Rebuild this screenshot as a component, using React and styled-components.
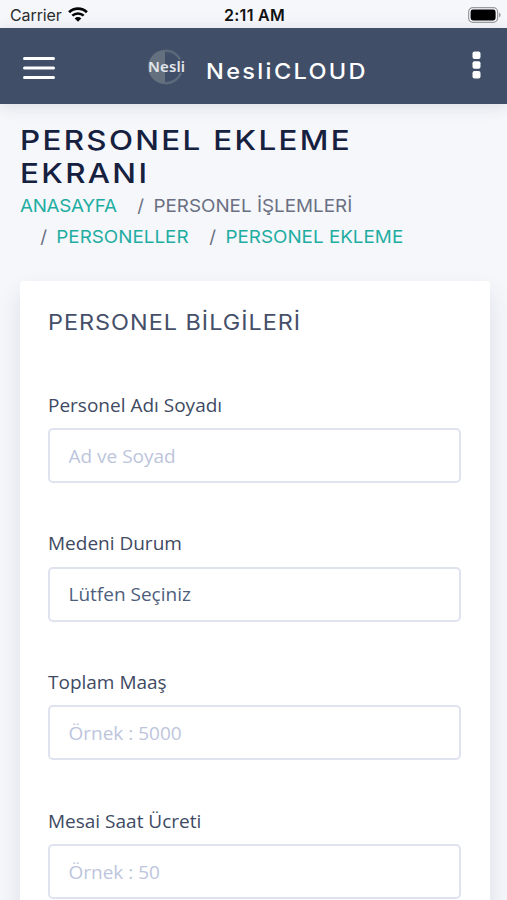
import React from 'react';
import styled, { createGlobalStyle } from 'styled-components';

const GlobalStyle = createGlobalStyle`
  *, *::before, *::after {
    box-sizing: border-box;
  }
  body {
    margin: 0;
    background: #f5f7fb;
    font-family: 'Open Sans', 'Noto Sans', sans-serif;
    overflow: hidden;
  }
`;

const PageStyles = styled.div`
  width: 100%;
  height: 900px;
  overflow: hidden;
  background: #f5f7fb;
`;

const StatusBar = styled.div`
  display: grid;
  grid-template-columns: 1fr auto 1fr;
  align-items: center;
  height: 28px;
  padding: 1px 6px 0 10px;
  font-family: Inter, sans-serif;
  font-size: 16px;
  color: #111;
`;
const Carrier = styled.div`
  display: flex;
  align-items: center;
  gap: 6px;
  color: #2b2c2e;
  letter-spacing: -0.1px;
`;
const Clock = styled.div`
  margin-right: 2px;
  font-weight: 600;
  letter-spacing: 0.3px;
`;
const Battery = styled.div`
  display: flex;
  justify-content: flex-end;
`;

const Navbar = styled.header`
  display: flex;
  align-items: center;
  height: 75.5px;
  padding: 4px 26px 0 23px;
  background: #414e68;
  box-shadow: 0 2px 16px rgba(50, 55, 85, 0.14);
  svg {
    display: block;
  }
`;
const NavButton = styled.button`
  padding: 0;
  padding-bottom: ${(props) => props.$lift || '0'};
  border: 0;
  background: none;
`;
const Brand = styled.div`
  display: flex;
  align-items: center;
  margin: -2px auto 0 92px;
`;
const BrandName = styled.span`
  margin: 11px 0 0 19px;
  font-family: Inter, sans-serif;
  font-size: 21px;
  font-weight: 500;
  line-height: 26px;
  letter-spacing: 2.1px;
  color: #fff;
  transform: scaleX(1.12);
  transform-origin: left;
`;

const ContentHeader = styled.section`
  height: 177.5px;
  padding: 20px 20px 0;
  font-family: Inter, sans-serif;
`;
const PageTitle = styled.h1`
  width: 330px;
  margin: 0;
  font-size: 27.5px;
  font-weight: 500;
  line-height: 33.5px;
  letter-spacing: 2.05px;
  color: #16203f;
  transform: scaleX(1.14);
  transform-origin: left;
`;
const Breadcrumb = styled.ol`
  display: flex;
  flex-wrap: wrap;
  width: 406px;
  margin: -1px 0 0;
  padding: 0;
  list-style: none;
  font-size: 17.8px;
  line-height: 31px;
  color: #6b6f82;
  transform: scaleX(1.06);
  transform-origin: left;
`;
const Crumb = styled.li`
  display: flex;
  gap: 8.8px;
  margin-right: 19.5px;
  margin-left: ${(props) => (props.$indent ? '19px' : '0')};
  &:first-child {
    letter-spacing: -0.3px;
  }
  a {
    color: #1fada2;
    text-decoration: none;
  }
`;

const Card = styled.main`
  height: 700px;
  margin: 0 17.5px 0 20px;
  padding: 27px 28.5px 0 28px;
  border-radius: 3px;
  background: #fff;
  box-shadow: 0 12px 24px rgba(50, 55, 75, 0.12);
`;
const CardTitle = styled.h2`
  margin: 0 0 59.5px;
  font-family: Inter, sans-serif;
  font-size: 21.3px;
  font-weight: 400;
  line-height: 28px;
  letter-spacing: 0.9px;
  color: #464f69;
  transform: scaleX(1.1);
  transform-origin: left;
`;
const Field = styled.div`
  height: 138.7px;
`;
const Label = styled.label`
  display: block;
  height: 32.5px;
  line-height: 18px;
  font-size: 19px;
  color: #404a63;
`;
const controlStyles = `
  display: block;
  width: 100%;
  height: 55px;
  padding: 0 18.5px;
  border: 2px solid #dfe3f0;
  border-radius: 5px;
  outline: 0;
  background: #fff;
  font-family: 'Open Sans', 'Noto Sans', sans-serif;
  font-size: 19px;
  color: #4e5e7c;
`;
const Input = styled.input`
  ${controlStyles}
  &::placeholder {
    color: #bdc5dc;
    opacity: 1;
  }
`;
const Select = styled.select`
  ${controlStyles}
  appearance: none;
`;

const WifiIcon = () => (
  <svg width="20" height="15" viewBox="0 0 20 15" fill="none" stroke="#050505">
    <path d="M1.1 5.2 A12.8 12.8 0 0 1 18.9 5.2" strokeWidth="2.7" />
    <path d="M4.3 8.7 A8.2 8.2 0 0 1 15.7 8.7" strokeWidth="2.5" />
    <path d="M10 14.8 L6.7 11.4 A4.7 4.7 0 0 1 13.3 11.4 Z" fill="#050505" stroke="none" />
  </svg>
);

const BatteryIcon = () => (
  <svg width="33" height="16" viewBox="0 0 33 16">
    <rect x="0.6" y="0.6" width="29" height="14.8" rx="4.3" fill="none" stroke="#9a9b9e" strokeWidth="1.2" />
    <rect x="2.6" y="2.6" width="25" height="10.8" rx="2.4" fill="#000" />
    <path d="M31 5.6 Q32.7 6.6 32.7 8 Q32.7 9.4 31 10.4 Z" fill="#9a9b9e" />
  </svg>
);

const MenuIcon = () => (
  <svg width="32" height="24" viewBox="0 0 32 24" stroke="#fff" strokeWidth="3" strokeLinecap="round">
    <path d="M1.5 2.5H30.5M1.5 12H30.5M1.5 21.5H30.5" />
  </svg>
);

const DotsIcon = () => (
  <svg width="9" height="28" viewBox="0 0 9 28" fill="#fff">
    <rect x="0.5" y="0.5" width="8" height="7.6" rx="2" />
    <rect x="0.5" y="10.2" width="8" height="7.6" rx="2" />
    <rect x="0.5" y="19.9" width="8" height="7.6" rx="2" />
  </svg>
);

const Logo = () => (
  <svg width="40" height="38" viewBox="0 0 40 38">
    <path d="M18 2 A17 17 0 0 0 18 36 Z" fill="#64707e" />
    <path d="M18 2.8 A16.5 16.5 0 0 1 33 11.5 M34 25 A16.5 16.5 0 0 1 18 35.2" fill="none" stroke="#5c697b" strokeWidth="2.4" />
    <text
      x="1"
      y="24"
      textLength="37"
      fontFamily="'Noto Sans', sans-serif"
      fontSize="15"
      fontWeight="600"
      fill="#e2e5ea"
    >
      Nesli
    </text>
  </svg>
);

const crumbs = [
  { text: 'ANASAYFA', link: true },
  { text: 'PERSONEL İŞLEMLERİ', slash: true },
  { text: 'PERSONELLER', link: true, slash: true, indent: true },
  { text: 'PERSONEL EKLEME', link: true, slash: true },
];

const fields = [
  { id: 'name', label: 'Personel Adı Soyadı', placeholder: 'Ad ve Soyad' },
  { id: 'marital', label: 'Medeni Durum', options: ['Lütfen Seçiniz'] },
  { id: 'salary', label: 'Toplam Maaş', placeholder: 'Örnek : 5000' },
  { id: 'overtime', label: 'Mesai Saat Ücreti', placeholder: 'Örnek : 50' },
];

const App = () => (
  <PageStyles>
    <GlobalStyle />
    <StatusBar>
      <Carrier>
        Carrier
        <WifiIcon />
      </Carrier>
      <Clock>2:11 AM</Clock>
      <Battery>
        <BatteryIcon />
      </Battery>
    </StatusBar>
    <Navbar>
      <NavButton type="button">
        <MenuIcon />
      </NavButton>
      <Brand>
        <Logo />
        <BrandName>NesliCLOUD</BrandName>
      </Brand>
      <NavButton type="button" $lift="6px">
        <DotsIcon />
      </NavButton>
    </Navbar>
    <ContentHeader>
      <PageTitle>PERSONEL EKLEME EKRANI</PageTitle>
      <Breadcrumb>
        {crumbs.map(({ text, link, slash, indent }) => (
          <Crumb key={text} $indent={indent}>
            {slash && <span>/</span>}
            {link ? <a href="#top">{text}</a> : <span>{text}</span>}
          </Crumb>
        ))}
      </Breadcrumb>
    </ContentHeader>
    <Card>
      <CardTitle>PERSONEL BİLGİLERİ</CardTitle>
      {fields.map(({ id, label, placeholder, options }) => (
        <Field key={id}>
          <Label htmlFor={id}>{label}</Label>
          {options ? (
            <Select id={id}>
              {options.map((option) => (
                <option key={option}>{option}</option>
              ))}
            </Select>
          ) : (
            <Input id={id} type="text" placeholder={placeholder} />
          )}
        </Field>
      ))}
    </Card>
  </PageStyles>
);

export default App;
